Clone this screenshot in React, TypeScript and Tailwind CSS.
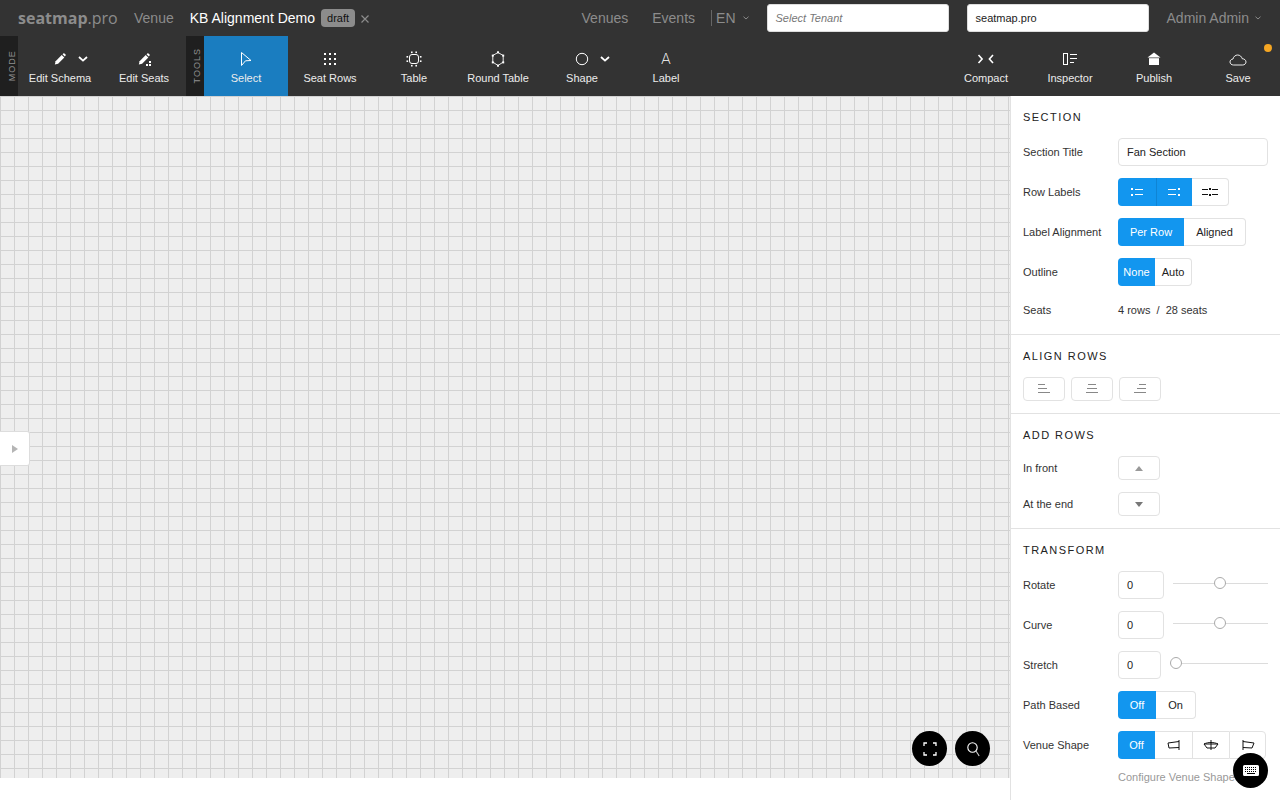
import React from 'react';

const FONT = "font-['Liberation_Sans',Arial,sans-serif]";

const Chevron = ({ className = '' }: { className?: string }) => (
  <svg width="10" height="6" viewBox="0 0 10 6" fill="none" stroke="currentColor" strokeWidth="1.8" className={className}>
    <path d="M1 1l4 3.6L9 1" />
  </svg>
);

const SmallChevron = () => (
  <svg width="6" height="4" viewBox="0 0 6 4" fill="none" stroke="#8a8a8a" strokeWidth="1">
    <path d="M.5 .7L3 3l2.5-2.3" />
  </svg>
);

const Pencil = ({ dots }: { dots?: boolean }) => (
  <svg width="16" height="16" viewBox="0 0 16 16" fill="#fff">
    <path d="M2.800 13.500l.8-3.300L9.700 4l2.600 2.600-6.200 6.100z" />
    <path d="M10.500 3.200l.9-.8c.3-.3.7-.3 1 0l1.200 1.200c.3.3.3.7 0 1l-.8.9z" />
    {dots && (
      <>
        <rect x="13" y="10" width="2" height="2" />
        <rect x="10" y="13" width="2" height="2" />
        <rect x="13" y="13" width="2" height="2" />
      </>
    )}
  </svg>
);

const Cursor = () => (
  <svg width="16" height="16" viewBox="0 0 16 16" fill="none" stroke="#fff" strokeWidth="1">
    <path d="M3.500 1.500L13 9.500l-5.500.3-4 4.700z" />
  </svg>
);

const SeatDots = () => (
  <svg width="14" height="14" viewBox="0 0 14 14" fill="#fff">
    {[2, 7, 12].flatMap((x) =>
      [2, 7, 12].map((y) => <rect key={`${x}-${y}`} x={x - 1} y={y - 1} width="2" height="2" />)
    )}
  </svg>
);

const TableIcon = () => (
  <svg width="16" height="16" viewBox="0 0 16 16" fill="#fff">
    <rect x="3.500" y="3.500" width="9" height="9" rx="2.500" fill="none" stroke="#fff" />
    <rect x="5" y="0.500" width="1.600" height="1.600" />
    <rect x="9.400" y="0.500" width="1.600" height="1.600" />
    <rect x="5" y="13.900" width="1.600" height="1.600" />
    <rect x="9.400" y="13.900" width="1.600" height="1.600" />
    <rect x="0.500" y="5" width="1.600" height="1.600" />
    <rect x="0.500" y="9.400" width="1.600" height="1.600" />
    <rect x="13.900" y="5" width="1.600" height="1.600" />
    <rect x="13.900" y="9.400" width="1.600" height="1.600" />
  </svg>
);

const RoundTableIcon = () => (
  <svg width="16" height="16" viewBox="0 0 16 16" fill="#fff">
    <path d="M8 1.500l5.200 3v6.600L8 14.500l-5.200-3.400V4.500z" fill="none" stroke="#fff" strokeWidth="0.900" />
    <rect x="7" y="0.300" width="2" height="2" />
    <rect x="7" y="13.700" width="2" height="2" />
    <rect x="1.800" y="3.600" width="2" height="2" />
    <rect x="12.200" y="3.600" width="2" height="2" />
    <rect x="1.800" y="10.400" width="2" height="2" />
    <rect x="12.200" y="10.400" width="2" height="2" />
  </svg>
);

const CircleIcon = () => (
  <svg width="14" height="14" viewBox="0 0 14 14" fill="none" stroke="#fff" strokeWidth="1">
    <circle cx="7" cy="7" r="5.700" />
  </svg>
);

const CompactIcon = () => (
  <svg width="18" height="12" viewBox="0 0 18 12" fill="none" stroke="#fff" strokeWidth="1.600">
    <path d="M1.500 2l3.600 4-3.600 4M16 2l-3.600 4 3.600 4" />
  </svg>
);

const InspectorIcon = () => (
  <svg width="16" height="14" viewBox="0 0 16 14" fill="none" stroke="#fff">
    <rect x="1.500" y="1.500" width="4" height="11" />
    <path d="M8 2.500h7M8 6.500h7M8 10.500h4" />
  </svg>
);

const PublishIcon = () => (
  <svg width="14" height="14" viewBox="0 0 14 14" fill="#fff">
    <path d="M7 .5L13.500 5.500H.5z" />
    <rect x="2" y="6.200" width="10" height="6.800" />
  </svg>
);

const CloudIcon = () => (
  <svg width="18" height="14" viewBox="0 0 18 14" fill="none" stroke="#fff" strokeWidth="0.900">
    <path d="M4.500 13C2.500 13 1 11.700 1 10c0-1.600 1.200-2.800 3-3 .5-2.500 2.500-4 4.600-4 2.300 0 4 1.500 4.600 3.700 2.300.1 3.800 1.500 3.800 3.300 0 1.700-1.500 3-3.500 3z" />
  </svg>
);

const ToolButton = ({
  label,
  icon,
  chevron,
  active,
}: {
  label: string;
  icon: React.ReactNode;
  chevron?: boolean;
  active?: boolean;
}) => (
  <div className={`relative flex w-[84px] flex-col items-center pt-[14px] ${active ? 'bg-[#1a7dc0]' : ''}`}>
    <div className="flex h-[18px] items-center justify-center">{icon}</div>
    {chevron && <Chevron className="absolute left-[60px] top-[20px] text-white" />}
    <div className="mt-[2px] text-center text-[11px] leading-[16px] text-[#ececec]">{label}</div>
  </div>
);

const VerticalTag = ({ children }: { children: string }) => (
  <div className="flex w-[18px] items-center justify-center bg-[#1f1f1f]">
    <span className="translate-x-[3px] -rotate-90 text-[9px] tracking-[1px] text-[#8f8f8f]">{children}</span>
  </div>
);

const Heading = ({ children }: { children: string }) => (
  <div className="h-[14px] text-[11px] leading-[14px] tracking-[1.45px] text-[#222]">{children}</div>
);

const Row = ({ label, children }: { label: string; children: React.ReactNode }) => (
  <div className="flex h-[28px] items-center">
    <div className="w-[95px] shrink-0 text-[11px] text-[#333]">{label}</div>
    {children}
  </div>
);

const Seg = ({
  children,
  on,
  w,
  divider,
}: {
  children: React.ReactNode;
  on?: boolean;
  w: string;
  divider?: boolean;
}) => (
  <div
    className={`flex h-full items-center justify-center text-[11px] ${w} ${
      on ? 'bg-[#1296ef] text-white' : 'border-y border-[#e2e2e2] text-[#222]'
    } ${divider ? (on ? 'border-l border-[#0f84d4]' : 'border-l border-[#e2e2e2]') : ''}`}
  >
    {children}
  </div>
);

const Segments = ({ children }: { children: React.ReactNode }) => (
  <div className="flex h-[28px] [&>*:first-child]:rounded-l-[4px] [&>*:last-child]:rounded-r-[4px] [&>*:last-child]:border-r">
    {children}
  </div>
);

const RowLabelIcon = ({ kind, color }: { kind: 'left' | 'right' | 'both'; color: string }) => (
  <svg width="16" height="10" viewBox="0 0 16 10" fill={color}>
    {kind === 'left' && (
      <>
        <rect x="2" y="1" width="2" height="2" />
        <rect x="2" y="7" width="2" height="2" />
        <rect x="6" y="2" width="8" height="1" />
        <rect x="6" y="7" width="8" height="1" />
      </>
    )}
    {kind === 'right' && (
      <>
        <rect x="1" y="2" width="8" height="1" />
        <rect x="1" y="7" width="8" height="1" />
        <rect x="11" y="1" width="2" height="2" />
        <rect x="11" y="7" width="2" height="2" />
      </>
    )}
    {kind === 'both' && (
      <>
        <rect x="0" y="2" width="6" height="1" />
        <rect x="0" y="7" width="6" height="1" />
        <rect x="7" y="1" width="2" height="2" />
        <rect x="7" y="7" width="2" height="2" />
        <rect x="10" y="2" width="6" height="1" />
        <rect x="10" y="7" width="6" height="1" />
      </>
    )}
  </svg>
);

const AlignButton = ({ lines }: { lines: [number, number][] }) => (
  <div className="flex h-[24px] w-[42px] items-center justify-center rounded-[4px] border border-[#e2e2e2]">
    <svg width="14" height="10" viewBox="0 0 14 10" stroke="#888" strokeWidth="1">
      {lines.map(([a, b], i) => (
        <path key={i} d={`M${a} ${i * 4 + 0.5}H${b}`} />
      ))}
    </svg>
  </div>
);

const Field = ({ w, children }: { w: string; children: string }) => (
  <div className={`flex h-[28px] items-center rounded-[4px] border border-[#e2e2e2] pl-[8px] text-[11px] text-[#222] ${w}`}>{children}</div>
);

const Slider = ({ grow, knob }: { grow: string; knob: string }) => (
  <div className={`relative -mt-[4px] h-[12px] ${grow}`}>
    <div className="absolute inset-x-0 top-[5.5px] h-px bg-[#dcdcdc]" />
    <div className={`absolute top-0 h-[12px] w-[12px] rounded-full border border-[#aaa] bg-white ${knob}`} />
  </div>
);

const Divider = () => <div className="h-px bg-[#e2e2e2]" />;

const VenueIcon = ({ variant }: { variant: 0 | 1 | 2 }) => (
  <svg width="16" height="12" viewBox="0 0 16 12" fill="none" stroke="#111" strokeWidth="1">
    {variant === 0 && <path d="M13 1v10M13 2.500L2 4l1 5 10-.5" />}
    {variant === 1 && <path d="M8 1v10M1 5c4-2 10-2 14 0l-3 4H4zM1 5h14" />}
    {variant === 2 && <path d="M3 1v10M3 2.500l11 1.500-2 5-9-.5" />}
  </svg>
);

const RoundButton = ({ className, children }: { className: string; children: React.ReactNode }) => (
  <div className={`absolute flex h-[35px] w-[35px] items-center justify-center rounded-full bg-black ${className}`}>{children}</div>
);

export default function App() {
  return (
    <div className={`relative flex h-[800px] w-[1280px] flex-col overflow-hidden bg-white ${FONT}`}>
      {/* top nav */}
      <div className="flex h-[36px] shrink-0 items-center bg-[#333] pl-[18px] text-[14px]">
        <div className="w-[116px] text-[16px] leading-[20px] text-[#8c8c8c]">
          <span className="font-['Open_Sans',sans-serif] font-bold">seatmap</span>
          <span className="font-['Open_Sans',sans-serif] font-normal">.pro</span>
        </div>
        <span className="text-[#8c8c8c]">Venue</span>
        <span className="ml-[16px] text-white">KB Alignment Demo</span>
        <span className="ml-[6px] rounded-[4px] bg-[#8c8c8c] px-[6px] text-[11px] leading-[18px] text-[#111]">draft</span>
        <svg width="10" height="10" viewBox="0 0 10 10" stroke="#8c8c8c" strokeWidth="1.200" className="ml-[5px] mt-[1px]">
          <path d="M1.500 1.500l7 7M8.500 1.500l-7 7" />
        </svg>
        <span className="ml-auto text-[#8c8c8c]">Venues</span>
        <span className="ml-[24px] text-[#8c8c8c]">Events</span>
        <div className="ml-[16px] h-[16px] w-px bg-[#666]" />
        <span className="ml-[4px] text-[#8c8c8c]">EN</span>
        <div className="ml-[7px] mr-[18px]">
          <SmallChevron />
        </div>
        <div className="flex h-[28px] w-[182px] items-center rounded-[3px] border border-[#ddd] bg-white pl-[8px] text-[11px] italic text-[#777]">
          Select Tenant
        </div>
        <div className="ml-[18px] flex h-[28px] w-[182px] items-center rounded-[3px] border border-[#ddd] bg-white pl-[8px] text-[11px] text-[#222]">
          seatmap.pro
        </div>
        <span className="ml-[18px] text-[#8c8c8c]">Admin Admin</span>
        <div className="ml-[6px] mr-[19px]">
          <SmallChevron />
        </div>
      </div>

      {/* toolbar */}
      <div className="relative flex h-[60px] shrink-0 bg-[#333]">
        <VerticalTag>MODE</VerticalTag>
        <ToolButton label="Edit Schema" icon={<Pencil />} chevron />
        <ToolButton label="Edit Seats" icon={<Pencil dots />} />
        <VerticalTag>TOOLS</VerticalTag>
        <ToolButton label="Select" icon={<Cursor />} active />
        <ToolButton label="Seat Rows" icon={<SeatDots />} />
        <ToolButton label="Table" icon={<TableIcon />} />
        <ToolButton label="Round Table" icon={<RoundTableIcon />} />
        <ToolButton label="Shape" icon={<CircleIcon />} chevron />
        <ToolButton label="Label" icon={<span className="font-['Inter',sans-serif] text-[15px] font-extralight leading-[18px] text-white">A</span>} />
        <div className="ml-auto flex">
          <ToolButton label="Compact" icon={<CompactIcon />} />
          <ToolButton label="Inspector" icon={<InspectorIcon />} />
          <ToolButton label="Publish" icon={<PublishIcon />} />
          <ToolButton label="Save" icon={<CloudIcon />} />
        </div>
        <div className="absolute right-[8px] top-[8px] h-[8px] w-[8px] rounded-full bg-[#f5a623]" />
      </div>

      <div className="flex min-h-0 flex-1">
        {/* canvas */}
        <div className="flex min-w-0 flex-1 flex-col">
          <div className="relative h-[682px] bg-[#eee] bg-[linear-gradient(to_right,#d2d2d2_1px,transparent_1px),linear-gradient(to_bottom,#d2d2d2_1px,transparent_1px)] bg-[size:14px_14px]">
            <div className="absolute left-0 top-[335px] flex h-[35px] w-[30px] items-center justify-center rounded-r-[3px] border border-l-0 border-[#ddd] bg-white">
              <svg width="6" height="8" viewBox="0 0 6 8" fill="#b5b5b5">
                <path d="M0 0l6 4-6 4z" />
              </svg>
            </div>
            <RoundButton className="left-[912px] top-[635px]">
              <svg width="14" height="14" viewBox="0 0 14 14" fill="none" stroke="#fff" strokeWidth="1.300">
                <path d="M1 4V1h3M10 1h3v3M13 10v3h-3M4 13H1v-3" />
              </svg>
            </RoundButton>
            <RoundButton className="left-[955px] top-[635px]">
              <svg width="16" height="16" viewBox="0 0 16 16" fill="none" stroke="#fff" strokeWidth="1.100">
                <circle cx="7.500" cy="6.500" r="4.700" />
                <path d="M11 10l3.200 5" stroke="#ccc" />
              </svg>
            </RoundButton>
          </div>
          <div className="flex-1 bg-white" />
        </div>

        {/* inspector */}
        <div className="w-[270px] shrink-0 border-l border-[#e2e2e2] bg-white">
          <div className="px-[12px] pb-[10px] pt-[14px]">
            <Heading>SECTION</Heading>
            <div className="mt-[14px] flex flex-col gap-[12px]">
              <Row label="Section Title">
                <Field w="w-[150px]">Fan Section</Field>
              </Row>
              <Row label="Row Labels">
                <Segments>
                  <Seg on w="w-[38px]">
                    <RowLabelIcon kind="left" color="#fff" />
                  </Seg>
                  <Seg on divider w="w-[36px]">
                    <RowLabelIcon kind="right" color="#fff" />
                  </Seg>
                  <Seg w="w-[37px]">
                    <RowLabelIcon kind="both" color="#111" />
                  </Seg>
                </Segments>
              </Row>
              <Row label="Label Alignment">
                <Segments>
                  <Seg on w="w-[66px]">Per Row</Seg>
                  <Seg w="w-[62px]">Aligned</Seg>
                </Segments>
              </Row>
              <Row label="Outline">
                <Segments>
                  <Seg on w="w-[37px]">None</Seg>
                  <Seg w="w-[37px]">Auto</Seg>
                </Segments>
              </Row>
            </div>
            <div className="mt-[10px]">
              <Row label="Seats">
                <span className="whitespace-pre text-[11px] text-[#333]">4 rows  /  28 seats</span>
              </Row>
            </div>
          </div>
          <Divider />
          <div className="px-[12px] pb-[12px] pt-[14px]">
            <Heading>ALIGN ROWS</Heading>
            <div className="mt-[14px] flex gap-[6px]">
              <AlignButton lines={[[1, 8], [1, 10], [1, 13]]} />
              <AlignButton lines={[[3, 11], [2, 12], [1, 13]]} />
              <AlignButton lines={[[6, 13], [4, 13], [1, 13]]} />
            </div>
          </div>
          <Divider />
          <div className="px-[12px] pb-[12px] pt-[14px]">
            <Heading>ADD ROWS</Heading>
            <div className="mt-[14px] flex flex-col gap-[12px]">
              <div className="flex h-[24px] items-center">
                <div className="w-[95px] text-[11px] text-[#333]">In front</div>
                <div className="flex h-[24px] w-[42px] items-center justify-center rounded-[4px] border border-[#e2e2e2]">
                  <svg width="8" height="5" viewBox="0 0 8 5" fill="#999">
                    <path d="M4 0l4 5H0z" />
                  </svg>
                </div>
              </div>
              <div className="flex h-[24px] items-center">
                <div className="w-[95px] text-[11px] text-[#333]">At the end</div>
                <div className="flex h-[24px] w-[42px] items-center justify-center rounded-[4px] border border-[#e2e2e2]">
                  <svg width="8" height="5" viewBox="0 0 8 5" fill="#777">
                    <path d="M0 0h8L4 5z" />
                  </svg>
                </div>
              </div>
            </div>
          </div>
          <Divider />
          <div className="px-[12px] pt-[14px]">
            <Heading>TRANSFORM</Heading>
            <div className="mt-[14px] flex flex-col gap-[12px]">
              <Row label="Rotate">
                <Field w="w-[46px]">0</Field>
                <Slider grow="ml-[9px] w-[95px]" knob="left-[41px]" />
              </Row>
              <Row label="Curve">
                <Field w="w-[46px]">0</Field>
                <Slider grow="ml-[9px] w-[95px]" knob="left-[41px]" />
              </Row>
              <Row label="Stretch">
                <Field w="w-[43px]">0</Field>
                <Slider grow="ml-[9px] w-[98px]" knob="left-0" />
              </Row>
              <Row label="Path Based">
                <Segments>
                  <Seg on w="w-[38px]">Off</Seg>
                  <Seg w="w-[40px]">On</Seg>
                </Segments>
              </Row>
              <Row label="Venue Shape">
                <Segments>
                  <Seg on w="w-[37px]">Off</Seg>
                  <Seg w="w-[37px]">
                    <VenueIcon variant={0} />
                  </Seg>
                  <Seg divider w="w-[37px]">
                    <VenueIcon variant={1} />
                  </Seg>
                  <Seg divider w="w-[37px]">
                    <VenueIcon variant={2} />
                  </Seg>
                </Segments>
              </Row>
            </div>
            <div className="ml-[95px] mt-[11px] h-[14px] whitespace-nowrap text-[11px] leading-[14px] text-[#999]">Configure Venue Shape</div>
          </div>
        </div>
      </div>

      <div className="absolute left-[1233px] top-[753px] flex h-[35px] w-[35px] items-center justify-center rounded-full bg-black">
        <svg width="16" height="11" viewBox="0 0 16 11" fill="#fff">
          <path d="M1.500 0h13A1.500 1.500 0 0116 1.500v8a1.500 1.500 0 01-1.500 1.500h-13A1.500 1.500 0 010 9.500v-8A1.500 1.500 0 011.500 0z" />
          <g fill="#000">
            {[2, 4, 6, 8, 10, 12].flatMap((x) => [2, 4, 6].map((y) => <rect key={`${x}-${y}`} x={x} y={y} width="1" height="1" />))}
            <rect x="4" y="8" width="8" height="1" />
          </g>
        </svg>
      </div>
    </div>
  );
}
